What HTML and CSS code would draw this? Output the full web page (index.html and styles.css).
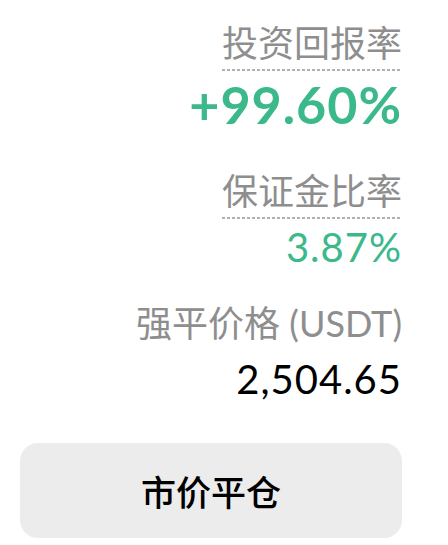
FILE: index.html
```html
<!DOCTYPE html>
<html lang="zh-CN">
<head>
  <meta charset="UTF-8">
  <meta name="viewport" content="width=device-width, initial-scale=1.0">
  <title>仓位详情</title>
  <link rel="stylesheet" href="styles.css">
</head>
<body>
  <div id="position-panel">
    <!-- ROE -->
    <div class="stat">
      <div class="stat-label dotted">投资回报率</div>
      <div class="stat-value up big">+99.60%</div>
    </div>

    <!-- Margin ratio -->
    <div class="stat">
      <div class="stat-label dotted">保证金比率</div>
      <div class="stat-value up">3.87%</div>
    </div>

    <!-- Liquidation price -->
    <div class="stat">
      <div class="stat-label">强平价格 (USDT)</div>
      <div class="stat-value">2,504.65</div>
    </div>

    <button id="close-market">市价平仓</button>
  </div>
</body>
</html>
```

FILE: styles.css
```css
:root {
  --label-color: #8e8e8e;
  --up-color: #3cb98a;
  --text-color: #000000;
  --button-bg-color: #ececec;
}

body {
  margin: 0;
  background-color: #ffffff;
  color: var(--text-color);
  font-family: Lato, "Noto Sans CJK SC", sans-serif;
}

#position-panel {
  width: 382px;
  padding: 20px 0 0 20px;
  display: flex;
  flex-direction: column;
  align-items: flex-end;
}

.stat {
  display: flex;
  flex-direction: column;
  align-items: flex-end;
  margin-bottom: 27px;
}

.stat-label {
  font-size: 36px;
  line-height: 46px;
  padding-bottom: 5px;
  color: var(--label-color);
}

.dotted {
  background-image: linear-gradient(to right, #b0b0b0 60%, transparent 60%);
  background-size: 5px 2px;
  background-repeat: repeat-x;
  background-position: left bottom;
}

.stat-value {
  font-size: 40px;
  line-height: 52px;
  letter-spacing: 1px;
  margin-top: 2px;
}

.stat-value.big {
  font-size: 52px;
  font-weight: 700;
  line-height: 60px;
  margin-top: 3px;
  margin-bottom: 7px;
}

.up {
  color: var(--up-color);
}

#close-market {
  align-self: stretch;
  margin-top: 11px;
  height: 95px;
  border: none;
  border-radius: 18px;
  background-color: var(--button-bg-color);
  color: var(--text-color);
  font-family: "Noto Sans CJK SC", sans-serif;
  font-size: 35px;
  font-weight: 500;
  cursor: pointer;
}
```
